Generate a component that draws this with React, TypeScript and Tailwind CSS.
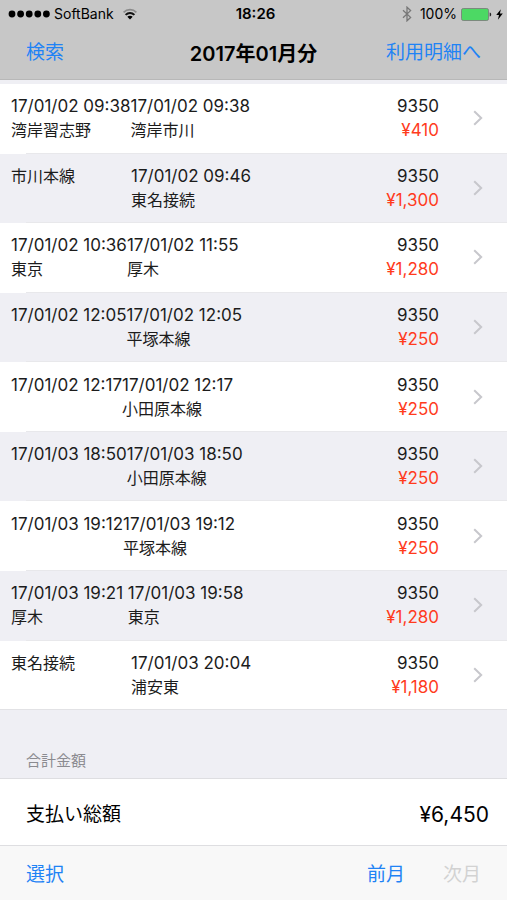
type Trip = {
  entryTime?: string;
  entry?: string;
  exitTime: string;
  exit: string;
  card: string;
  fee: string;
};

const trips: Trip[] = [
  { entryTime: '17/01/02 09:38', entry: '湾岸習志野', exitTime: '17/01/02 09:38', exit: '湾岸市川', card: '9350', fee: '¥410' },
  { entry: '市川本線', exitTime: '17/01/02 09:46', exit: '東名接続', card: '9350', fee: '¥1,300' },
  { entryTime: '17/01/02 10:36', entry: '東京', exitTime: '17/01/02 11:55', exit: '厚木', card: '9350', fee: '¥1,280' },
  { entryTime: '17/01/02 12:05', exitTime: '17/01/02 12:05', exit: '平塚本線', card: '9350', fee: '¥250' },
  { entryTime: '17/01/02 12:17', exitTime: '17/01/02 12:17', exit: '小田原本線', card: '9350', fee: '¥250' },
  { entryTime: '17/01/03 18:50', exitTime: '17/01/03 18:50', exit: '小田原本線', card: '9350', fee: '¥250' },
  { entryTime: '17/01/03 19:12', exitTime: '17/01/03 19:12', exit: '平塚本線', card: '9350', fee: '¥250' },
  { entryTime: '17/01/03 19:21\u00a0', entry: '厚木', exitTime: '17/01/03 19:58', exit: '東京', card: '9350', fee: '¥1,280' },
  { entry: '東名接続', exitTime: '17/01/03 20:04', exit: '浦安東', card: '9350', fee: '¥1,180' },
];

function SignalDots() {
  return (
    <svg width="42" height="8" viewBox="0 0 42 8" fill="currentColor" aria-hidden="true">
      {[4, 12.6, 21.2, 29.8, 38.4].map((cx) => (
        <circle key={cx} cx={cx} cy="4" r="3.4" />
      ))}
    </svg>
  );
}

function WifiIcon() {
  return (
    <svg width="16" height="12" viewBox="0 0 16 12" fill="none" strokeWidth="1.7" aria-hidden="true">
      <path d="M1.6 4.3C5.2 0.7 10.8 0.7 14.4 4.3" stroke="#8a8a8a" />
      <path d="M3.6 6.9C6.2 4.3 9.8 4.3 12.4 6.9" stroke="#111" strokeWidth="2" />
      <path d="M8 11.4L5.3 8.8C6.8 7.4 9.2 7.4 10.7 8.8Z" fill="#000" />
    </svg>
  );
}

function BluetoothIcon() {
  return (
    <svg width="10" height="16" viewBox="0 0 10 16" fill="none" stroke="#777" strokeWidth="1.3" aria-hidden="true">
      <path d="M1 4.3L8.6 11.4L5 14.8V1.2L8.6 4.6L1 11.7" />
    </svg>
  );
}

function BatteryIcon() {
  return (
    <svg width="31" height="13" viewBox="0 0 31 13" aria-hidden="true">
      <rect x="0.5" y="0.5" width="27" height="12" rx="1.8" fill="#4cd964" stroke="#777" strokeWidth="0.8" />
      <path d="M28.7 4.5C30.7 5 30.7 8 28.7 8.5Z" fill="#222" />
    </svg>
  );
}

function BoltIcon() {
  return (
    <svg width="7" height="11" viewBox="0 0 7 11" fill="currentColor" aria-hidden="true">
      <path d="M4.9 0.2L0.2 6.1H3L1.9 10.8L6.8 4.6H3.9Z" />
    </svg>
  );
}

function Chevron() {
  return (
    <svg width="10" height="16" viewBox="0 0 10 16" fill="none" stroke="#c7c7cc" strokeWidth="2" aria-hidden="true">
      <path d="M1.2 1.2L8.2 8L1.2 14.8" />
    </svg>
  );
}

function StatusBar() {
  return (
    <div className="grid h-7 grid-cols-[1fr_auto_1fr] items-center pl-2 pr-1 text-sm">
      <div className="flex items-center gap-1">
        <SignalDots />
        <span>SoftBank</span>
        <span className="pl-1">
          <WifiIcon />
        </span>
      </div>
      <span className="text-[15px] font-semibold">18:26</span>
      <div className="flex items-center justify-end gap-1">
        <BluetoothIcon />
        <span className="pl-1">100%</span>
        <BatteryIcon />
        <BoltIcon />
      </div>
    </div>
  );
}

function TripRow({ trip, last }: { trip: Trip; last: boolean }) {
  return (
    <li className="flex flex-1 flex-col odd:bg-white">
      <a href="#detail" className="flex flex-1 items-center pl-[11px] pr-6 leading-6">
        <div className={trip.entryTime ? 'shrink-0' : 'w-[120px] shrink-0'}>
          {trip.entryTime && <p className="text-[17px] leading-6">{trip.entryTime}</p>}
          <p className="h-6">{trip.entry}</p>
          {!trip.entryTime && <p className="h-6"></p>}
        </div>
        <div className="flex-1">
          <p className="text-[17px] leading-6">{trip.exitTime}</p>
          <p>{trip.exit}</p>
        </div>
        <div className="text-right text-[17px] leading-6">
          <p>{trip.card}</p>
          <p className="text-[#ff3b1d]">{trip.fee}</p>
        </div>
        <span className="pl-[34px]">
          <Chevron />
        </span>
      </a>
      <div className={last ? 'h-px bg-[#e2e2e5]' : 'ml-[26px] h-px bg-[#e8e8eb]'}></div>
    </li>
  );
}

export default function App() {
  return (
    <div className="flex min-h-screen flex-col bg-[#efeff4] font-['Inter','Noto_Sans_CJK_JP',sans-serif] text-base text-[#1c1c1c]">
      <header className="border-b border-[#b8b8b8] bg-[#c7c7c7] text-black">
        <StatusBar />
        <nav className="grid h-[51px] grid-cols-[1fr_auto_1fr] items-center px-[26px] text-[19px]">
          <button type="button" className="justify-self-start text-[#1f83f5]">検索</button>
          <h1 className="text-xl font-semibold">2017年01月分</h1>
          <button type="button" className="justify-self-end text-[#1f83f5]">利用明細へ</button>
        </nav>
      </header>

      <main className="flex flex-1 flex-col pt-1">
        <ul className="flex flex-1 flex-col">
          {trips.map((trip, index) => (
            <TripRow key={index} trip={trip} last={index === trips.length - 1} />
          ))}
        </ul>

        <section>
          <h2 className="flex h-[69px] items-end border-b border-[#dedee1] px-[26px] pb-[7px] text-[15px] leading-5 text-[#8b8b90]">
            合計金額
          </h2>
          <div className="flex h-[67px] items-center justify-between border-b border-[#dedee1] bg-white pl-[26px] pr-[18px] pt-[6px] text-[19px] text-black">
            <span>支払い総額</span>
            <span className="text-[21px]">¥6,450</span>
          </div>
        </section>
      </main>

      <footer className="flex h-[54px] items-center gap-[38px] bg-[#f8f8f8] px-[26px] pt-1 text-[19px] text-[#1f83f5]">
        <button type="button" className="mr-auto">選択</button>
        <button type="button">前月</button>
        <button type="button" disabled className="text-[#d2d2d2]">次月</button>
      </footer>
    </div>
  );
}
